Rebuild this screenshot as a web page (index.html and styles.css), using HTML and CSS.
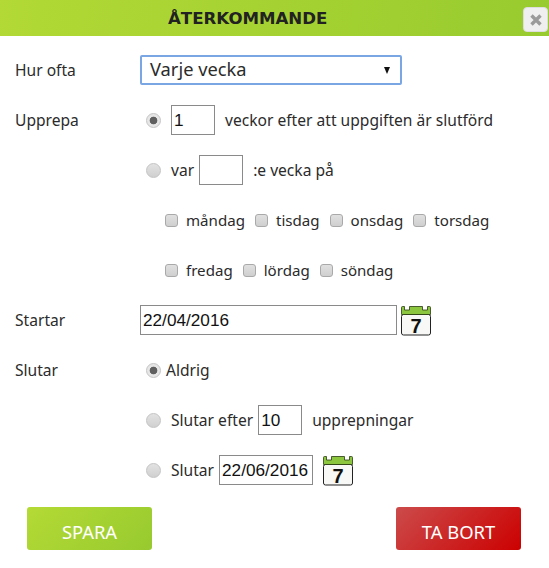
FILE: index.html
```html
<!DOCTYPE html>
<html lang="sv">
  <head>
    <meta charset="UTF-8" />
    <title>Återkommande</title>
    <link rel="stylesheet" href="styles.css">
  </head>
  <body>
    <div class="header">
      <h1 class="title">ÅTERKOMMANDE</h1>
      <button class="close-btn" aria-label="Stäng">
        <svg width="14" height="14" viewBox="0 0 14 14"><path d="M2.500 2.500l9 9M11.500 2.500l-9 9" stroke="#9a9a9a" stroke-width="3.4" fill="none"/></svg>
      </button>
    </div>
    <form class="form">
      <div class="row">
        <span class="label">Hur ofta</span>
        <div class="select-box"><span class="select-text">Varje vecka</span><span class="arrow"></span></div>
      </div>
      <div class="row">
        <span class="label">Upprepa</span>
        <input type="radio" class="radio" name="upprepa" checked>
        <input type="text" class="num gap-left" value="1">
        <span class="after">veckor efter att uppgiften är slutförd</span>
      </div>
      <div class="row indent">
        <input type="radio" class="radio" name="upprepa">
        <span class="gap-left">var</span>
        <input type="text" class="num gap-small">
        <span class="after">:e vecka på</span>
      </div>
      <div class="row days">
        <input type="checkbox" class="check"><span class="day">måndag</span>
        <input type="checkbox" class="check"><span class="day">tisdag</span>
        <input type="checkbox" class="check"><span class="day">onsdag</span>
        <input type="checkbox" class="check"><span class="day">torsdag</span>
      </div>
      <div class="row days">
        <input type="checkbox" class="check"><span class="day">fredag</span>
        <input type="checkbox" class="check"><span class="day">lördag</span>
        <input type="checkbox" class="check"><span class="day">söndag</span>
      </div>
      <div class="row">
        <span class="label">Startar</span>
        <input type="text" class="date-long" value="22/04/2016">
        <svg class="cal cal-start" width="32" height="31" viewBox="0 0 32 31">
          <rect x="1.500" y="9.500" width="29" height="20.500" rx="2" fill="#f8f8f6" stroke="#222"/>
          <path d="M1.500 9.500V2.500q0-1 1-1h2v3.500h5V1.500h13v3.500h5V1.500h2q1 0 1 1v7z" fill="#8cc63f" stroke="#2a3a10" stroke-width=".8"/>
          <text x="16" y="27.500" class="cal-num">7</text>
        </svg>
      </div>
      <div class="row">
        <span class="label">Slutar</span>
        <input type="radio" class="radio" name="slutar" checked>
        <span class="aldrig">Aldrig</span>
      </div>
      <div class="row indent">
        <input type="radio" class="radio" name="slutar">
        <span class="gap-left">Slutar efter</span>
        <input type="text" class="num gap-tiny" value="10">
        <span class="after">upprepningar</span>
      </div>
      <div class="row indent">
        <input type="radio" class="radio" name="slutar">
        <span class="gap-left">Slutar</span>
        <input type="text" class="date-short gap-tiny" value="22/06/2016">
        <svg class="cal cal-end" width="32" height="31" viewBox="0 0 32 31">
          <rect x="1.500" y="9.500" width="29" height="20.500" rx="2" fill="#f8f8f6" stroke="#222"/>
          <path d="M1.500 9.500V2.500q0-1 1-1h2v3.500h5V1.500h13v3.500h5V1.500h2q1 0 1 1v7z" fill="#8cc63f" stroke="#2a3a10" stroke-width=".8"/>
          <text x="16" y="27.500" class="cal-num">7</text>
        </svg>
      </div>
      <div class="buttons">
        <button type="button" class="btn btn-save">SPARA</button>
        <button type="button" class="btn btn-delete">TA BORT</button>
      </div>
    </form>
  </body>
</html>
```

FILE: styles.css
```css
* {
  margin: 0;
  padding: 0;
  box-sizing: border-box;
}

body {
  background: #fff;
  color: #2b2b2b;
  font-family: "Noto Sans", Tahoma, sans-serif;
  font-size: 15.6px;
  height: 568px;
  overflow: hidden;
}

.header {
  height: 36px;
  display: flex;
  align-items: center;
  justify-content: space-between;
  padding: 0 1px 0 168px;
  background: linear-gradient(100deg, #b2d935, #98cb2f);
}

.title {
  font-family: "DejaVu Sans", Verdana, sans-serif;
  font-size: 16.6px;
  font-weight: bold;
  color: #222;
}

.close-btn {
  width: 25px;
  height: 25px;
  margin-top: 3px;
  border: 1px solid #ddd;
  border-radius: 4px;
  background: #efefef;
  display: flex;
  align-items: center;
  justify-content: center;
}

.form {
  padding: 9px 0 0 15px;
}

.row {
  height: 50px;
  display: flex;
  align-items: center;
}

.label {
  width: 125px;
}

.indent {
  padding-left: 125px;
}

.days {
  padding-left: 150px;
}

.select-box {
  width: 262px;
  height: 30px;
  border: 2px solid #7ba6e4;
  border-radius: 2px;
  display: flex;
  align-items: center;
  justify-content: space-between;
  padding: 0 10px 0 8px;
  font-size: 18.3px;
}

.select-text {
  margin-top: -3px;
}

.arrow {
  width: 0;
  height: 0;
  border-left: 3.5px solid transparent;
  border-right: 3.5px solid transparent;
  border-top: 7px solid #111;
}

.radio {
  appearance: none;
  width: 15px;
  height: 15px;
  margin-left: 6px;
  border: 1px solid #c4c4c4;
  border-radius: 50%;
  background: linear-gradient(#e2e2e2, #d0d0d0);
}

.radio:checked {
  background: radial-gradient(circle, #5f5f5f 0 3.5px, #e6e6e6 4.2px);
}

.check {
  appearance: none;
  width: 13px;
  height: 13px;
  border: 1px solid #a9a9a9;
  border-radius: 3px;
  background: linear-gradient(#e0e0e0, #cfcfcf);
}

.day {
  margin: 0 10px 0 8px;
  font-size: 15.1px;
}

input[type="text"] {
  height: 30px;
  border: 1px solid #8a8a8a;
  color: #111;
  font-family: "Liberation Sans", Arial, sans-serif;
  font-size: 17.2px;
  padding: 1px 2px 0;
}

input.num {
  width: 44px;
}

.gap-left {
  margin-left: 10px;
}

.gap-small {
  margin-left: 5px;
}

input.gap-tiny {
  margin-left: 5px;
}

.after {
  margin-left: 10px;
}

.aldrig {
  margin-left: 5px;
}

input.date-long {
  width: 257px;
}

input.date-short {
  width: 94px;
}

.cal {
  flex: none;
}

.cal-start {
  margin-left: 3px;
}

.cal-end {
  margin-left: 9px;
}

.cal-num {
  font-family: "Liberation Sans", Arial, sans-serif;
  font-size: 20px;
  font-weight: bold;
  fill: #111;
  text-anchor: middle;
}

.buttons {
  display: flex;
  justify-content: space-between;
  width: 494px;
  margin: 12px 0 0 12px;
}

.btn {
  width: 125px;
  height: 43px;
  border: none;
  border-radius: 3px;
  color: #fff;
  font-family: "Noto Sans", Tahoma, sans-serif;
  font-size: 18.4px;
  padding-top: 6px;
}

.btn-save {
  background: linear-gradient(135deg, #b4da35, #97ca2f);
}

.btn-delete {
  background: linear-gradient(135deg, #cc4b4b, #cc0000);
}
```
